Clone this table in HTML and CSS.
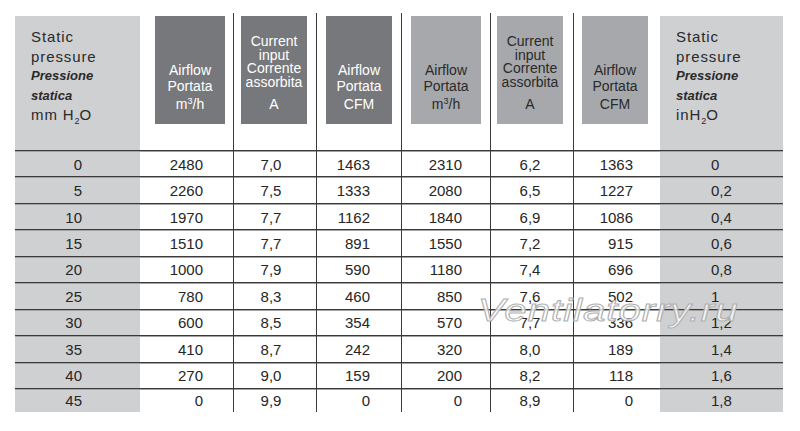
FILE: index.html
```html
<!DOCTYPE html>
<html lang="en">
<head>
<meta charset="utf-8">
<title>Static pressure table</title>
<link rel="stylesheet" href="styles.css">
</head>
<body>
<div class="page">
  <div class="table">
    <!-- header -->
    <div class="hside hleft">
      <div class="st">Static</div>
      <div class="st">pressure</div>
      <div class="it">Pressione</div>
      <div class="it">statica</div>
      <div class="st">mm H<span class="sub">2</span>O</div>
    </div>
    <div class="hcell sep"><div class="box dark b2"><div class="lbl">Airflow</div><div class="lbl">Portata</div><div class="unit">m<span class="sup">3</span>/h</div></div></div>
    <div class="hcell sep"><div class="box dark b3 cur"><div class="lbl">Current</div><div class="lbl">input</div><div class="lbl">Corrente</div><div class="lbl">assorbita</div><div class="unit">A</div></div></div>
    <div class="hcell sep"><div class="box dark b4"><div class="lbl">Airflow</div><div class="lbl">Portata</div><div class="unit">CFM</div></div></div>
    <div class="hcell sep"><div class="box light b5"><div class="lbl">Airflow</div><div class="lbl">Portata</div><div class="unit">m<span class="sup">3</span>/h</div></div></div>
    <div class="hcell sep"><div class="box light b6 cur"><div class="lbl">Current</div><div class="lbl">input</div><div class="lbl">Corrente</div><div class="lbl">assorbita</div><div class="unit">A</div></div></div>
    <div class="hcell"><div class="box light b7"><div class="lbl">Airflow</div><div class="lbl">Portata</div><div class="unit">CFM</div></div></div>
    <div class="hside hright">
      <div class="st">Static</div>
      <div class="st">pressure</div>
      <div class="it">Pressione</div>
      <div class="it">statica</div>
      <div class="st">inH<span class="sub">2</span>O</div>
    </div>

    <!-- rows -->
    <div class="d gray c1">0</div><div class="d sep c2">2480</div><div class="d sep c3">7,0</div><div class="d sep c4">1463</div><div class="d sep c5">2310</div><div class="d sep c6">6,2</div><div class="d c7">1363</div><div class="d gray c8">0</div>
    <div class="d gray c1">5</div><div class="d sep c2">2260</div><div class="d sep c3">7,5</div><div class="d sep c4">1333</div><div class="d sep c5">2080</div><div class="d sep c6">6,5</div><div class="d c7">1227</div><div class="d gray c8">0,2</div>
    <div class="d gray c1">10</div><div class="d sep c2">1970</div><div class="d sep c3">7,7</div><div class="d sep c4">1162</div><div class="d sep c5">1840</div><div class="d sep c6">6,9</div><div class="d c7">1086</div><div class="d gray c8">0,4</div>
    <div class="d gray c1">15</div><div class="d sep c2">1510</div><div class="d sep c3">7,7</div><div class="d sep c4">891</div><div class="d sep c5">1550</div><div class="d sep c6">7,2</div><div class="d c7">915</div><div class="d gray c8">0,6</div>
    <div class="d gray c1">20</div><div class="d sep c2">1000</div><div class="d sep c3">7,9</div><div class="d sep c4">590</div><div class="d sep c5">1180</div><div class="d sep c6">7,4</div><div class="d c7">696</div><div class="d gray c8">0,8</div>
    <div class="d gray c1">25</div><div class="d sep c2">780</div><div class="d sep c3">8,3</div><div class="d sep c4">460</div><div class="d sep c5">850</div><div class="d sep c6">7,6</div><div class="d c7">502</div><div class="d gray c8">1</div>
    <div class="d gray c1">30</div><div class="d sep c2">600</div><div class="d sep c3">8,5</div><div class="d sep c4">354</div><div class="d sep c5">570</div><div class="d sep c6">7,7</div><div class="d c7">336</div><div class="d gray c8">1,2</div>
    <div class="d gray c1">35</div><div class="d sep c2">410</div><div class="d sep c3">8,7</div><div class="d sep c4">242</div><div class="d sep c5">320</div><div class="d sep c6">8,0</div><div class="d c7">189</div><div class="d gray c8">1,4</div>
    <div class="d gray c1">40</div><div class="d sep c2">270</div><div class="d sep c3">9,0</div><div class="d sep c4">159</div><div class="d sep c5">200</div><div class="d sep c6">8,2</div><div class="d c7">118</div><div class="d gray c8">1,6</div>
    <div class="d gray c1">45</div><div class="d sep c2">0</div><div class="d sep c3">9,9</div><div class="d sep c4">0</div><div class="d sep c5">0</div><div class="d sep c6">8,9</div><div class="d c7">0</div><div class="d gray c8">1,8</div>
  </div>
  <div class="watermark">Ventilatorry.ru</div>
</div>
</body>
</html>
```

FILE: styles.css
```css
html, body {
  margin: 0;
  padding: 0;
  background: #ffffff;
}

body {
  font-family: "Liberation Sans", Arial, sans-serif;
  color: #2a2a2a;
  width: 800px;
  height: 431px;
  overflow: hidden;
}

.page {
  position: relative;
  width: 800px;
  height: 431px;
  box-sizing: border-box;
  padding: 13px 0 0 15px;
}

.table {
  width: 768px;
  display: grid;
  grid-template-columns: 125px 94px 83px 85px 89px 83px 86px 123px;
  grid-template-rows: 137px repeat(9, 26.44px) 24px;
}

/* header side cells */
.hside {
  margin-top: 3px;
  background: #cfd0d2;
  padding: 11.3px 0 0 16px;
  box-sizing: border-box;
  color: #2a2a2a;
}

.st {
  font-size: 15px;
  line-height: 19.5px;
  letter-spacing: 0.9px;
}

.it {
  font-size: 13px;
  line-height: 19.5px;
  font-weight: bold;
  font-style: italic;
}

.sub {
  font-size: 9px;
  line-height: 0;
  vertical-align: -4px;
  letter-spacing: 0;
}

.sup {
  font-size: 9px;
  line-height: 0;
  vertical-align: 5px;
}

/* header data cells */
.hcell {
  box-sizing: border-box;
}

.sep {
  border-right: 1px solid #3a3a3a;
}

.box {
  margin-top: 3px;
  height: 108px;
  box-sizing: border-box;
  padding-bottom: 12px;
  display: flex;
  flex-direction: column;
  justify-content: flex-end;
  align-items: center;
  text-align: center;
  font-size: 14px;
}

.box .lbl {
  line-height: 15.5px;
}

.box .unit {
  line-height: 16px;
  margin-top: 2px;
}

.box.cur .lbl {
  line-height: 13.8px;
}

.box.cur .unit {
  margin-top: 6px;
}

.dark {
  background: #77787b;
  color: #ffffff;
}

.light {
  background: #a7a8ab;
  color: #2a2a2a;
}

.b2 { margin-left: 15px; width: 70px; }
.b3 { margin-left: 7px; width: 66px; }
.b4 { margin-left: 9px; width: 66px; }
.b5 { margin-left: 9px; width: 70px; }
.b6 { margin-left: 6px; width: 66px; }
.b7 { margin-left: 8px; width: 66px; }

/* data cells */
.d {
  box-sizing: border-box;
  border-top: 1px solid #3a3a3a;
  box-shadow: inset 0 1px 0 #a3a3a3;
  display: flex;
  align-items: center;
  font-size: 15px;
  color: #262626;
  padding-top: 1px;
}

.gray {
  background: #cfd0d2;
}

.c1 { justify-content: flex-end; padding-right: 58px; }
.c2 { justify-content: flex-end; padding-right: 30px; }
.c3 { justify-content: center; padding-right: 8px; }
.c4 { justify-content: flex-end; padding-right: 31px; }
.c5 { justify-content: flex-end; padding-right: 28px; }
.c6 { justify-content: center; padding-right: 4px; }
.c7 { justify-content: flex-end; padding-right: 27px; }
.c8 { justify-content: flex-start; padding-left: 51px; }

/* watermark overlay */
.watermark {
  position: absolute;
  left: 478px;
  top: 294px;
  font-family: "Liberation Sans", Arial, sans-serif;
  font-style: italic;
  font-size: 32px;
  line-height: 32px;
  letter-spacing: 0.8px;
  color: rgba(255, 255, 255, 0.8);
  -webkit-text-stroke: 1px #b0b0b0;
  transform: scaleX(1.255);
  transform-origin: left top;
  white-space: nowrap;
}
```
